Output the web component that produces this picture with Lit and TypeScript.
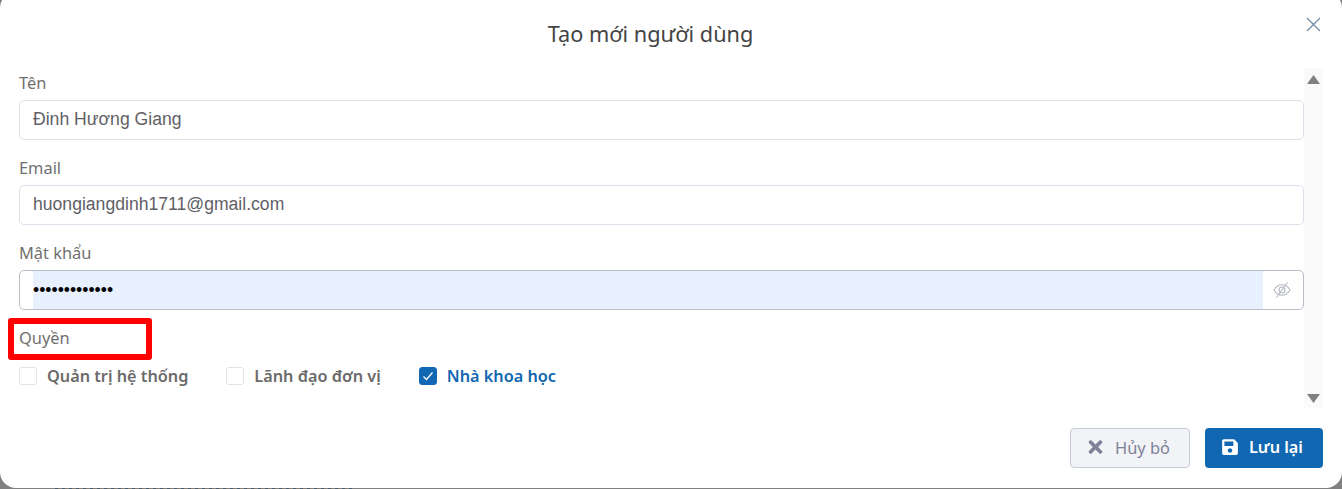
import { LitElement, html, css } from "lit";
import { customElement } from "lit/decorators.js";

@customElement("app-root")
export class AppRoot extends LitElement {
  static styles = css`
    :host { display: block; width: 1342px; height: 489px; overflow: hidden; background: #808080; position: relative; font-family: "Noto Sans", sans-serif; }
    .specks { position: absolute; left: 55px; top: 488px; width: 297px; height: 1px; background: repeating-linear-gradient(90deg, #4a5c6c 0 3px, #86796c 3px 5px, #808080 5px 7px); }
    .modal { height: 496px; margin-top: -8px; background: #fff; border-radius: 16px; display: flex; flex-direction: column; box-sizing: border-box; position: relative; }
    .header { height: 76px; flex: none; display: flex; align-items: center; box-sizing: border-box; padding-top: 8px; }
    .title { flex: 1; text-align: center; font-size: 21.7px; line-height: 30px; color: #444; }
    .close { width: 41px; flex: none; display: flex; padding-left: 5px; box-sizing: border-box; margin-top: -20px; }
    .close svg { width: 15px; height: 15px; }
    .middle { display: flex; height: 340px; flex: none; padding: 0 19px; }
    .form { flex: 1; min-width: 0; display: flex; flex-direction: column; }
    .field { display: flex; flex-direction: column; height: 85px; }
    .label { font-size: 16.4px; line-height: 22px; color: #6f6f6f; padding-top: 4px; height: 32px; box-sizing: border-box; }
    .box { height: 40px; border: 1px solid #dcdfea; border-radius: 5px; display: flex; align-items: center; padding: 0 13px 2px; box-sizing: border-box; background: #fff; }
    .box.active { border-color: #b9bec9; padding: 0 0 0 13px; align-items: stretch; }
    input { border: 0; outline: 0; padding: 0; margin: 0; flex: 1; min-width: 0; width: 100%; font-family: "Liberation Sans", Arial, sans-serif; font-size: 17.6px; color: #5f6066; background: transparent; }
    .box.active input { background: #e8f0fe; color: #000; }
    .eye { width: 40px; flex: none; display: flex; align-items: center; justify-content: center; padding-right: 2px; box-sizing: border-box; }
    .eye svg { width: 18px; height: 18px; }
    .checks { display: flex; gap: 38px; align-items: center; height: 18px; margin-top: 12px; }
    .check { display: flex; align-items: center; gap: 10px; font-size: 16.25px; font-weight: 600; color: #6b6b6b; line-height: 18px; }
    .check.on { color: #1167b1; }
    .cb { width: 18px; height: 18px; border: 1px solid #e0e2ec; border-radius: 3px; box-sizing: border-box; background: #fff; display: flex; align-items: center; justify-content: center; }
    .on .cb { background: #1167b1; border-color: #1167b1; }
    .cb svg { width: 12px; height: 12px; }
    .bar { width: 19px; flex: none; background: #fafafa; display: flex; flex-direction: column; justify-content: space-between; align-items: center; padding: 7px 0 5px; box-sizing: border-box; }
    .bar svg { width: 13px; height: 9px; display: block; }
    .footer { display: flex; justify-content: flex-end; gap: 15px; padding: 20px 19px 0 0; }
    .btn { height: 40px; border-radius: 4px; display: flex; align-items: center; box-sizing: border-box; font-size: 16.25px; font-weight: 600; padding-bottom: 2px; }
    .cancel { width: 120px; background: #f1f3f6; border: 1px solid #c5ccd6; color: #7e8299; padding-left: 17px; gap: 12px; font-size: 16.4px; font-weight: 400; }
    .cancel svg { width: 15px; height: 20px; }
    .save { width: 118px; background: #1167b1; color: #fff; padding-left: 17px; gap: 11px; }
    .save svg { width: 16px; height: 18px; }
    .mark { position: absolute; left: 8px; top: 318px; width: 144px; height: 42px; border: 6px solid #ff0000; border-radius: 3px; box-sizing: border-box; pointer-events: none; }
  `;

  render() {
    return html`
      <div class="specks"></div>
      <div class="modal">
        <div class="header">
          <div class="title">Tạo mới người dùng</div>
          <div class="close"><svg viewBox="0 0 15 15" fill="none" stroke="#6f8aa5" stroke-width="1.2"><path d="M1 1l13 13M14 1L1 14"/></svg></div>
        </div>
        <div class="middle">
          <div class="form">
            <div class="field"><div class="label">Tên</div><div class="box"><input .value=${"Đinh Hương Giang"} /></div></div>
            <div class="field"><div class="label">Email</div><div class="box"><input .value=${"huongiangdinh1711@gmail.com"} /></div></div>
            <div class="field"><div class="label">Mật khẩu</div><div class="box active"><input type="password" .value=${"1234567890123"} />
              <div class="eye"><svg viewBox="0 0 18 18" fill="none" stroke="#b5b8c2" stroke-width="1.1"><path d="M1 9c2-3.400 4.800-5.200 8-5.200s6 1.800 8 5.200c-2 3.400-4.800 5.200-8 5.200S3 12.400 1 9z"/><circle cx="9" cy="9" r="3"/><path d="M14.500 1.500L3.500 16.500"/></svg></div></div></div>
            <div class="label">Quyền</div>
            <div class="checks">
              <div class="check"><span class="cb"></span>Quản trị hệ thống</div>
              <div class="check"><span class="cb"></span>Lãnh đạo đơn vị</div>
              <div class="check on"><span class="cb"><svg viewBox="0 0 12 12" fill="none" stroke="#fff" stroke-width="1.300"><path d="M1.500 6.500l3 3 6-7"/></svg></span>Nhà khoa học</div>
            </div>
          </div>
          <div class="bar">
            <svg viewBox="0 0 13 9"><path d="M6.500 0L13 9H0z" fill="#808080"/></svg>
            <svg viewBox="0 0 13 9"><path d="M0 0h13L6.500 9z" fill="#808080"/></svg>
          </div>
        </div>
        <div class="footer">
          <div class="btn cancel"><svg viewBox="0 0 352 512" fill="#7e8299"><path d="M242.72 256l100.07-100.07c12.28-12.28 12.28-32.19 0-44.48l-22.24-22.24c-12.28-12.28-32.19-12.28-44.48 0L176 189.28 75.93 89.21c-12.28-12.28-32.19-12.28-44.48 0L9.21 111.45c-12.28 12.28-12.28 32.19 0 44.48L109.28 256 9.21 356.07c-12.28 12.28-12.28 32.19 0 44.48l22.24 22.24c12.28 12.28 32.2 12.28 44.48 0L176 322.72l100.07 100.07c12.28 12.28 32.2 12.28 44.48 0l22.24-22.24c12.28-12.28 12.28-32.19 0-44.48L242.72 256z"/></svg>Hủy bỏ</div>
          <div class="btn save"><svg viewBox="0 0 448 512" fill="#fff"><path d="M433.941 129.941l-83.882-83.882A48 48 0 0 0 316.118 32H48C21.49 32 0 53.49 0 80v352c0 26.51 21.49 48 48 48h352c26.51 0 48-21.49 48-48V163.882a48 48 0 0 0-14.059-33.941zM224 416c-35.346 0-64-28.654-64-64 0-35.346 28.654-64 64-64s64 28.654 64 64c0 35.346-28.654 64-64 64zm96-304.52V212c0 6.627-5.373 12-12 12H76c-6.627 0-12-5.373-12-12V108c0-6.627 5.373-12 12-12h228.52c3.183 0 6.235 1.264 8.485 3.515l3.48 3.48A11.996 11.996 0 0 1 320 111.48z"/></svg>Lưu lại</div>
        </div>
      </div>
      <div class="mark"></div>
    `;
  }
}
